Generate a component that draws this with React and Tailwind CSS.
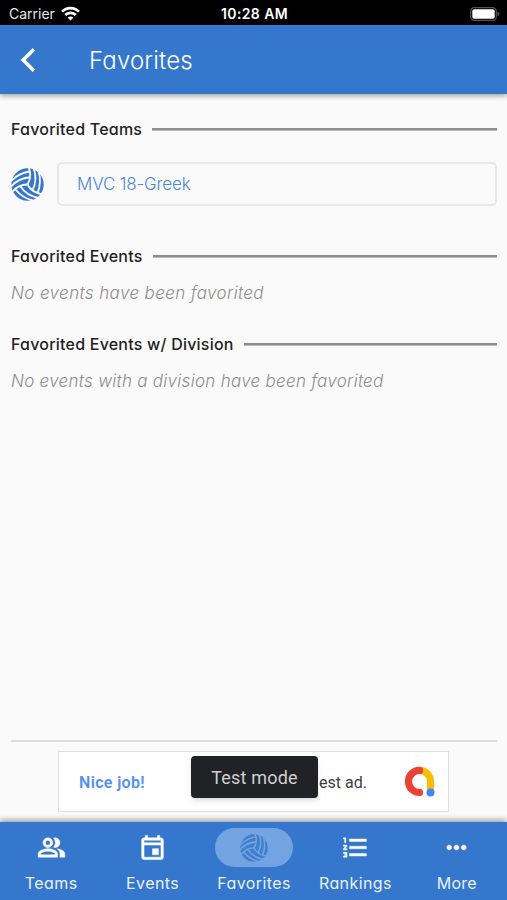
import { MdFormatListNumbered, MdMoreHoriz, MdOutlineEvent, MdOutlinePeopleAlt } from "react-icons/md";

// One third of the ball's seams, repeated at 120 degree turns
const SEAM_TURNS = [0, 120, 240];

const Volleyball = ({ className = "", seamClass = "" }) => (
    <svg viewBox="-50 -50 100 100" className={className}>
        <circle r="49" fill="currentColor" />
        {SEAM_TURNS.map((turn) => (
            <g key={turn} transform={`rotate(${turn})`} className={seamClass} fill="none" strokeWidth="5.5">
                <path d="M0 0Q14-22 4-51" />
                <path d="M15 18Q31-15 19-48" />
                <path d="M31 25Q43-8 34-38" />
            </g>
        ))}
    </svg>
);

const FavoritesIcon = () => (
    <Volleyball className="size-[28px] text-[#3f7fd0]" seamClass="stroke-[#73a3e0]" />
);

const NAV_ITEMS = [
    { id: "teams", label: "Teams", Icon: MdOutlinePeopleAlt, labelClass: "tracking-[0.4px]" },
    { id: "events", label: "Events", Icon: MdOutlineEvent, labelClass: "tracking-[0.4px]" },
    { id: "favorites", label: "Favorites", Icon: FavoritesIcon, active: true, labelClass: "tracking-[0.4px]" },
    { id: "rankings", label: "Rankings", Icon: MdFormatListNumbered, labelClass: "tracking-[0.4px]" },
    { id: "more", label: "More", Icon: MdMoreHoriz, labelClass: "tracking-[0.3px]" }
];

const StatusBar = () => (
    <div className="h-[25px] shrink-0 bg-black text-white grid grid-cols-3 items-center pl-[9px] pr-[7px] pt-[2px] font-['Inter',sans-serif] [font-feature-settings:normal]">
        <div className="flex items-center gap-[6px] text-[14px] text-gray-200">
            <span>Carrier</span>
            <svg viewBox="0 0 18 14" className="w-[19px] h-[15px]" fill="none" stroke="white" strokeWidth="2.6">
                <path d="M1 5.2a11.3 11.3 0 0 1 16 0" />
                <path d="M4 8.4a7 7 0 0 1 10 0" />
                <path d="M6.4 11a3.6 3.6 0 0 1 5.2 0L9 13.7z" fill="white" stroke="none" />
            </svg>
        </div>
        <div className="text-center text-[14px] font-semibold tracking-[0.4px] whitespace-nowrap">10:28 AM</div>
        <svg viewBox="0 0 30 14" className="w-[30px] h-[14px] justify-self-end">
            <rect x="0.7" y="0.7" width="25.6" height="12.6" rx="3.6" fill="none" stroke="#555" strokeWidth="1.2" />
            <rect x="2.3" y="2.3" width="22.4" height="9.4" rx="2" fill="white" />
            <path d="M27.5 4.8q2 .6 2 2.2t-2 2.2z" fill="#555" />
        </svg>
    </div>
);

const Section = ({ title, children }) => (
    <section>
        <div className="flex items-center gap-[10px] h-6">
            <h2 className="text-[16px] font-medium tracking-[0.22px] text-[#222] whitespace-nowrap">{title}</h2>
            <div className="flex-1 h-[3px] mt-px bg-[#8b8b8b] border-b border-[#bdbdbd]"></div>
        </div>
        {children}
    </section>
);

const AdBanner = () => (
    <div className="relative w-[391px] h-[61px] ml-[58px] bg-white border border-[#dfe1e1] flex items-center pl-5 pr-[13px] font-['Roboto',sans-serif] [font-feature-settings:normal]">
        <span className="pt-[2px] text-[16px] font-semibold tracking-[0.35px] text-[#5590ee]">Nice job!</span>
        <span className="ml-auto pt-[2px] text-[16px] text-[#3c4043]">est ad.</span>
        <svg viewBox="0 0 31 31" className="w-[31px] h-[31px] ml-[37px]" fill="none" strokeWidth="7.2" strokeLinecap="round">
            <path d="M15.5 4.4A11 11 0 0 1 26.5 15.4V25" stroke="#fbbc04" />
            <path d="M15.5 4.4A11 11 0 0 0 15.5 26.4" stroke="#ea4335" />
            <circle cx="26.5" cy="26.4" r="4" fill="#4285f4" />
        </svg>
        <div className="absolute left-[132px] top-[4px] w-[127px] h-[42px] rounded-[4px] bg-[#202226] shadow-md flex items-center justify-center text-[18px] tracking-[0.2px] text-[#cfd0d2]">
            Test mode
        </div>
    </div>
);

const BottomNav = () => (
    <nav className="relative h-[78px] shrink-0 bg-[#3477cc] text-white grid grid-cols-5 shadow-[0_-2px_6px_rgba(0,0,0,0.4)]">
        {NAV_ITEMS.map(({ id, label, Icon, active, labelClass }) => (
            <div key={id} className="flex flex-col items-center pt-[6px] pl-px">
                <div className={`w-[78px] h-[39px] rounded-full flex items-center justify-center ${active ? "bg-[#73a3e0]" : ""}`}>
                    <Icon className="size-[29px] [&>path:not([fill=none])]:stroke-[0.4px]" />
                </div>
                <span className={`mt-[4px] text-[16px] leading-6 text-[#eaf1fa] ${labelClass}`}>{label}</span>
            </div>
        ))}
    </nav>
);

const App = () => {
    return (
        <div className="w-full h-[900px] flex flex-col bg-[#fafafa] overflow-hidden font-['Inter',sans-serif] [font-feature-settings:'cv11']">
            <StatusBar />
            <header className="relative h-[69px] shrink-0 bg-[#3477cc] text-white flex items-center pl-5 shadow-[0_2px_5px_rgba(0,0,0,0.35)]">
                <svg viewBox="0 0 16 26" className="w-4 h-[26px]" fill="none" stroke="white" strokeWidth="3.6">
                    <path d="M14 2.2 3.2 13 14 23.8" />
                </svg>
                <h1 className="ml-[53px] pt-[2px] text-[24px] font-light tracking-[0.15px]">Favorites</h1>
            </header>

            <main className="flex-1 pl-[11px] pr-[10px] pt-[23px]">
                <Section title="Favorited Teams">
                    <div className="mt-[21px] flex items-center gap-[13px]">
                        <Volleyball className="size-[33px] text-[#3477cc]" seamClass="stroke-[#fafafa]" />
                        <div className="flex-1 h-[44px] rounded-[5px] border-2 border-[#e7e7e7] flex items-center pt-[2px] pl-[18px] text-[17px] font-light tracking-[-0.15px] text-[#4b87d4]">
                            MVC 18-Greek
                        </div>
                    </div>
                </Section>
                <div className="mt-[38px]">
                    <Section title="Favorited Events">
                        <p className="mt-[13px] text-[17px] leading-6 italic font-light tracking-[0.38px] text-[#8d8d8d]">No events have been favorited</p>
                    </Section>
                </div>
                <div className="mt-[27px]">
                    <Section title="Favorited Events w/ Division">
                        <p className="mt-[13px] text-[17px] leading-6 italic font-light tracking-[0.28px] text-[#8d8d8d]">No events with a division have been favorited</p>
                    </Section>
                </div>
            </main>

            <div className="shrink-0 mb-[10px]">
                <div className="ml-[11px] mr-[10px] mb-[9px] h-[2px] bg-[#dcdcdc]"></div>
                <AdBanner />
            </div>
            <BottomNav />
        </div>
    );
};

export default App;
